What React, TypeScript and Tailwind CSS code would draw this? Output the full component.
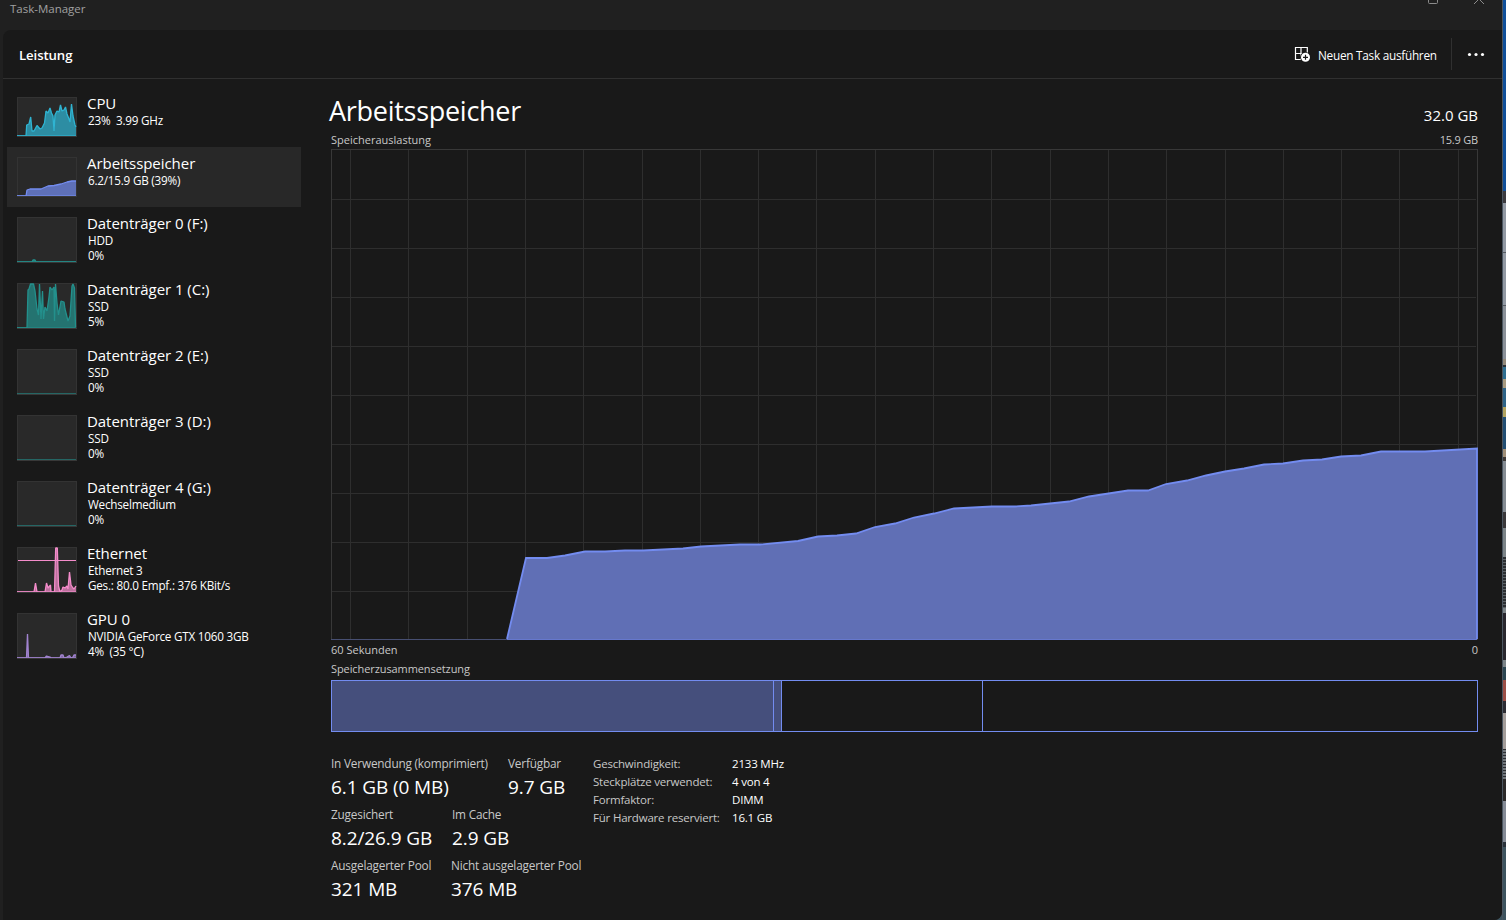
type Point = [number, number];

type Device = {
  name: string;
  lines: string[];
  color: string;
  height: number;
  points: Point[];
  marker?: number;
};

const devices: Device[] = [
  {
    name: "CPU",
    lines: ["23%  3.99 GHz"],
    color: "#2fb4d2",
    height: 40,
    points: [
      [0, 39], [9, 39], [9.7, 28], [12, 27], [13.7, 20], [15, 34], [17, 34],
      [20, 28.5], [23, 32], [25, 31], [27.5, 26], [29, 14], [31, 16], [33, 11],
      [34.5, 16], [36, 19], [37, 34], [38, 18], [40, 14], [42, 15], [43.5, 8],
      [45, 14], [47, 13], [48.5, 10], [50, 17], [52, 22], [53, 25], [54.5, 7],
      [56, 19], [58, 28], [59, 30],
    ],
  },
  {
    name: "Arbeitsspeicher",
    lines: ["6.2/15.9 GB (39%)"],
    color: "#738cf0",
    height: 40,
    points: [
      [0, 39], [9, 39], [10, 33], [13, 32], [24, 32], [31, 29], [37, 28.5],
      [44, 27], [50, 25], [55, 24], [59, 24],
    ],
  },
  {
    name: "Datenträger 0 (F:)",
    lines: ["HDD", "0%"],
    color: "#23908c",
    height: 46,
    points: [[0, 45], [15, 45], [16, 43], [18, 43], [19, 45], [59, 45]],
  },
  {
    name: "Datenträger 1 (C:)",
    lines: ["SSD", "5%"],
    color: "#23908c",
    height: 46,
    points: [
      [0, 45], [10, 45], [11, 7], [12, 6], [13.5, 1], [16.5, 1], [18, 8],
      [20, 26], [21.5, 32], [22.5, 1], [24, 36], [25.5, 8], [26.5, 36],
      [28, 24], [30, 28], [32, 14], [33, 4], [35, 7], [37, 4], [37.5, 38],
      [38.5, 1], [40, 20], [41.5, 32], [44, 18], [47, 19], [48, 26], [51, 38],
      [53, 33], [55, 3], [56, 1], [57.5, 5], [58.5, 44],
    ],
  },
  {
    name: "Datenträger 2 (E:)",
    lines: ["SSD", "0%"],
    color: "#23908c",
    height: 46,
    points: [[0, 45], [59, 45]],
  },
  {
    name: "Datenträger 3 (D:)",
    lines: ["SSD", "0%"],
    color: "#23908c",
    height: 46,
    points: [[0, 45], [59, 45]],
  },
  {
    name: "Datenträger 4 (G:)",
    lines: ["Wechselmedium", "0%"],
    color: "#23908c",
    height: 46,
    points: [[0, 45], [59, 45]],
  },
  {
    name: "Ethernet",
    lines: ["Ethernet 3", "Ges.: 80.0 Empf.: 376 KBit/s"],
    color: "#f48ccb",
    height: 46,
    marker: 13.5,
    points: [
      [0, 45], [17, 45], [18.5, 36], [20, 45], [28, 45], [29.5, 36], [31, 41],
      [33.5, 38], [34, 45], [37.5, 45], [38.7, 1], [40.3, 1], [41.5, 39],
      [43, 45], [45, 43], [46, 40], [48, 41], [50, 39], [51, 42], [52.5, 25],
      [54, 38], [56, 41], [57, 42], [59, 39],
    ],
  },
  {
    name: "GPU 0",
    lines: ["NVIDIA GeForce GTX 1060 3GB", "4%  (35 °C)"],
    color: "#a183d0",
    height: 46,
    points: [
      [0, 45], [9.5, 45], [10.5, 21], [11.5, 45], [28, 45], [29.5, 43],
      [33, 44], [34, 45], [43, 45], [44, 42], [46, 42], [47, 45], [50, 44],
      [52.5, 42.5], [54, 45], [56, 44], [57, 42], [59, 42],
    ],
  },
];

// memory usage over the last 60 seconds, in chart pixels
const usage: Point[] = [
  [176, 490], [195, 409], [216, 409], [234, 406.5], [254, 402.5], [274, 402.5],
  [294, 401.5], [312, 401.5], [352, 399.5], [370, 397.5], [409, 395.5],
  [429, 395.5], [467, 392], [487, 387.5], [506, 386.5], [525, 384.5],
  [544, 378], [564, 374.5], [583, 368.5], [603, 364.5], [623, 359.5],
  [661, 357.5], [684, 357.5], [700, 356.5], [719, 354.5], [738, 352.5],
  [758, 347.5], [797, 341.5], [817, 341.5], [835, 335], [856, 331.5],
  [875, 326.5], [894, 322.5], [913, 319.5], [933, 315.5], [952, 314.5],
  [972, 311.5], [991, 310.5], [1010, 307.5], [1030, 306.5], [1050, 302.5],
  [1094, 302.5], [1146, 299.5],
];

const facts = [
  ["Geschwindigkeit:", "2133 MHz"],
  ["Steckplätze verwendet:", "4 von 4"],
  ["Formfaktor:", "DIMM"],
  ["Für Hardware reserviert:", "16.1 GB"],
];

// slices of the desktop visible next to the window: [height, color]
const desktop: [number, string][] = [
  [191, "#11509a"], [12, "#3b3a3e"], [49, "#9299a3"], [1, "#555a60"],
  [52, "#9299a3"], [1, "#555a60"], [53, "#8b9199"], [6, "#94897a"],
  [2, "#2c3137"], [12, "#2f6f91"], [9, "#a89a80"], [19, "#2f6488"],
  [10, "#b2a35f"], [32, "#234f74"], [8, "#a08f78"], [4, "#3d3937"],
  [51, "#858c93"], [16, "#3b393b"], [29, "#7c8488"],
];

const toPath = (points: Point[]) => points.map((p) => p.join(",")).join(" ");

const Thumbnail = ({ device }: { device: Device }) => {
  const { height, points, color, marker } = device;
  const line = toPath(points);
  return (
    <svg width="60" height={height} className="shrink-0">
      <rect x="0.5" y="0.5" width="59" height={height - 1} fill="#292929" stroke="#333333" />
      <polygon points={`${line} 59,${height - 1} 0,${height - 1}`} fill={color} fillOpacity="0.72" />
      {points.length > 2 && (
        <polyline points={line} fill="none" stroke={color} strokeWidth="1.3" strokeLinejoin="bevel" />
      )}
      <path d={`M0 ${height - 1.5}H59`} stroke={color} strokeOpacity="0.6" />
      {marker && <path d={`M1 ${marker}H59`} stroke={color} />}
      <path d={`M0 ${height - 0.5}H60`} stroke="#383838" />
    </svg>
  );
};

const DeviceItem = ({ device, active }: { device: Device; active: boolean }) => (
  <div
    className={`flex pl-2.5 ${device.lines.length > 1 ? "h-[66px]" : "h-[60px]"} ${
      active ? "bg-[#282828]" : ""
    }`}
  >
    <div className="pt-2.5">
      <Thumbnail device={device} />
    </div>
    <div className="pl-2.5 pt-[7px] text-white whitespace-pre">
      <div className="text-[15px] leading-[19px] tracking-[-0.05px]">{device.name}</div>
      {device.lines.map((line) => (
        <div key={line} className="pl-px text-[11.7px] leading-[15px] tracking-[-0.22px]">
          {line}
        </div>
      ))}
    </div>
  </div>
);

const UsageChart = () => {
  const line = toPath(usage);
  return (
    <svg width="1147" height="491" className="block">
      <g stroke="#2e2e2e" shapeRendering="crispEdges">
        {Array.from({ length: 20 }, (_, i) => {
          const x = Math.round(19 + i * 58.3) + 0.5;
          return <path key={i} d={`M${x} 0V491`} />;
        })}
        {Array.from({ length: 9 }, (_, i) => (
          <path key={i} d={`M0 ${50.5 + i * 49}H1145`} />
        ))}
        <rect x="0.5" y="0.5" width="1146" height="490" fill="none" stroke="#383838" />
      </g>
      <polygon points={`${line} 1146,490.5 176,490.5`} fill="#6373bb" fillOpacity="0.96" />
      <polyline points={`${line} 1146,490`} fill="none" stroke="#738cf0" strokeWidth="1.8" />
      <path d="M0 490.5H176" stroke="#474f72" />
      <path d="M176 490.5H1146" stroke="#6678cd" />
    </svg>
  );
};

const Stat = ({ label, value, className = "" }: { label: string; value: string; className?: string }) => (
  <div className={`h-[51px] whitespace-nowrap ${className}`}>
    <div className="text-[11.8px] leading-4 tracking-[-0.19px] text-[#c8c8c8]">{label}</div>
    <div className="mt-[3px] text-[19px] leading-[26px] tracking-[-0.1px] text-white">{value}</div>
  </div>
);

const NewTaskIcon = () => (
  <svg width="17" height="17" viewBox="0 0 17 17" fill="none">
    <path d="M13.3 7V1.5H1.5v12H7M7 1.5v12M1.5 7.5h11.8" stroke="#fff" strokeWidth="1.2" />
    <circle cx="11.5" cy="11.3" r="5.4" fill="#191919" />
    <circle cx="11.5" cy="11.3" r="4.5" fill="#fff" />
    <path d="M11.5 8.8v5M9 11.3h5" stroke="#191919" strokeWidth="1.2" />
  </svg>
);

const TitleBar = () => (
  <div className="flex h-[30px] justify-between pl-2.5">
    <span className="text-[11.5px] leading-[18px] text-[#a0a0a0]">Task-Manager</span>
    <svg width="80" height="8" fill="none" stroke="#8c8c8c">
      <path d="M6.5 0v2.5q0 1 1 1h7q1 0 1-1V0" />
      <path d="M52 4l5-5l5 5" />
    </svg>
  </div>
);

const Toolbar = () => (
  <div className="flex h-[49px] items-center border-b border-[#303030] pl-4 text-white">
    <h1 className="pt-0.5 text-[13.2px] leading-5 font-semibold tracking-[-0.1px]">Leistung</h1>
    <div className="ml-auto flex items-center">
      <NewTaskIcon />
      <span className="ml-[7px] w-[133px] pt-px text-[11.8px] leading-5 tracking-[-0.27px] whitespace-nowrap">
        Neuen Task ausführen
      </span>
      <div className="h-8 w-px bg-[#303030]" />
      <svg width="50" height="6" fill="#fff">
        <circle cx="17.5" cy="3.5" r="1.6" />
        <circle cx="24" cy="3.5" r="1.6" />
        <circle cx="30.5" cy="3.5" r="1.6" />
      </svg>
    </div>
  </div>
);

const MemoryPage = () => (
  <main className="w-[1147px] text-[11px] text-[#c8c8c8]">
    <div className="flex h-[53px] items-end justify-between text-white">
      <h2 className="-ml-0.5 text-[27px] leading-[42px] tracking-[-0.28px]">Arbeitsspeicher</h2>
      <span className="text-[15px] leading-[34px]">32.0 GB</span>
    </div>
    <div className="flex h-[17px] justify-between leading-4">
      <span>Speicherauslastung</span>
      <span className="tracking-[-0.2px]">15.9 GB</span>
    </div>
    <UsageChart />
    <div className="flex h-5 justify-between leading-5">
      <span>60 Sekunden</span>
      <span>0</span>
    </div>
    <div className="h-5 leading-[18px] tracking-[-0.09px]">Speicherzusammensetzung</div>
    <div className="flex h-[52px] border border-[#738cf0]">
      <div className="w-[442px] border-r border-[#738cf0] bg-[#454f7c]" />
      <div className="w-2 border-r border-[#738cf0] bg-[#454f7c]" />
      <div className="w-[201px] border-r border-[#738cf0]" />
    </div>
    <div className="flex pt-[23px]">
      <div className="w-[262px]">
        <div className="flex">
          <Stat label="In Verwendung (komprimiert)" value="6.1 GB (0 MB)" className="w-[177px]" />
          <Stat label="Verfügbar" value="9.7 GB" />
        </div>
        <div className="flex">
          <Stat label="Zugesichert" value="8.2/26.9 GB" className="w-[121px]" />
          <Stat label="Im Cache" value="2.9 GB" />
        </div>
        <div className="flex">
          <Stat label="Ausgelagerter Pool" value="321 MB" className="w-[120px]" />
          <Stat label="Nicht ausgelagerter Pool" value="376 MB" />
        </div>
      </div>
      <dl className="text-[11.5px] leading-[18px] tracking-[-0.2px] whitespace-nowrap">
        {facts.map(([label, value]) => (
          <div key={label} className="flex">
            <dt className="w-[139px]">{label}</dt>
            <dd className="text-white">{value}</dd>
          </div>
        ))}
      </dl>
    </div>
  </main>
);

const Desktop = () => (
  <div className="h-[920px] w-1 overflow-hidden border-l border-[#4b5660] bg-[#3e545f]">
    {desktop.map(([height, color], i) => (
      <div key={i} style={{ height, background: color }} />
    ))}
    <div className="h-[51px] bg-[repeating-linear-gradient(#2c2f33_0_2px,#5d6367_2px_3px)]" />
    <div className="h-[5px] bg-[#7c8488]" />
    <div className="h-[47px] bg-[#29272e]" />
    <div className="h-[7px] bg-[#7c8488]" />
    <div className="h-[13px] bg-[#2c4652]" />
    <div className="h-[21px] bg-[#9c4f47]" />
    <div className="h-3 bg-[#2c2c33]" />
    <div className="h-9 bg-[#a39d9a]" />
    <div className="h-[30px] bg-[repeating-linear-gradient(#2c2f33_0_1px,#72777c_1px_3px)]" />
    <div className="h-[22px] bg-[#2b2929]" />
    <div className="h-[41px] bg-[#858b96]" />
    <div className="h-[5px] bg-[#2a323a]" />
  </div>
);

export default function App() {
  return (
    <div className="flex h-[920px] w-[1506px] overflow-hidden bg-[#3e545f] font-['Open_Sans','Noto_Sans',sans-serif]">
      <div className="flex w-[1502px] flex-col overflow-hidden rounded-br-lg bg-[#202020]">
        <TitleBar />
        <div className="ml-[3px] flex-1 rounded-tl-lg bg-[#191919]">
          <Toolbar />
          <div className="flex">
            <nav className="mr-[30px] ml-1 w-[294px] pt-2">
              {devices.map((device) => (
                <DeviceItem
                  key={device.name}
                  device={device}
                  active={device.name === "Arbeitsspeicher"}
                />
              ))}
            </nav>
            <MemoryPage />
          </div>
        </div>
      </div>
      <Desktop />
    </div>
  );
}
